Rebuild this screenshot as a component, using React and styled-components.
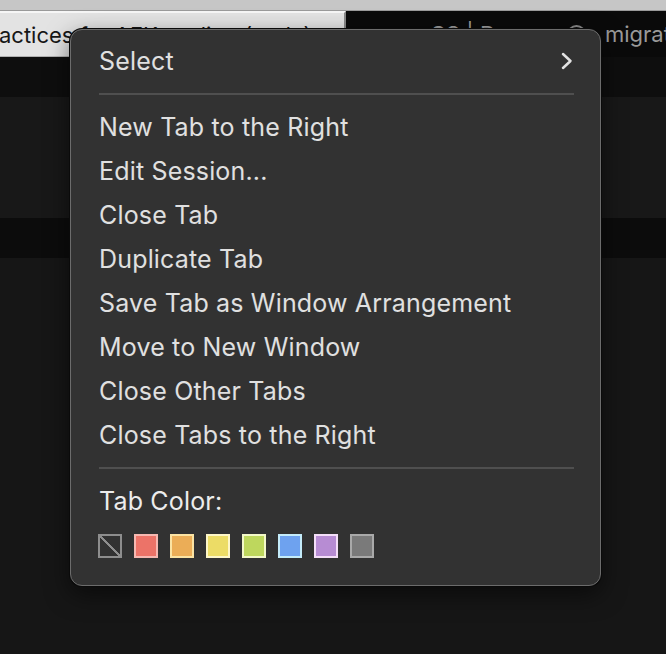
import React from 'react'
import styled, { createGlobalStyle } from 'styled-components'

const GlobalStyle = createGlobalStyle`
  html, body {
    margin: 0;
    padding: 0;
    background: #161616;
  }
  body {
    font-family: Inter, "Liberation Sans", sans-serif;
  }
`;

const Screen = styled.div`
  position: relative;
  width: 666px;
  height: 654px;
  overflow: hidden;
  background: #161616;
  display: flex;
  flex-direction: column;
`;

const TopStrip = styled.div`
  height: 10px;
  background: #c6c6c6;
  border-bottom: 1px solid #9a9a9a;
`;

const TabBar = styled.div`
  height: 46px;
  display: flex;
`;

const ActiveTab = styled.div`
  width: 344px;
  background: #e3e3e3;
  border-top: 2px solid #f6f6f6;
  border-right: 2px solid #8a8a8a;
  border-bottom: 1px solid #b0b0b0;
  display: flex;
  align-items: center;
  overflow: hidden;
  white-space: nowrap;
  font-size: 22px;
  color: #161616;
  span {
    margin-left: -1px;
  }
`;

const OtherTabs = styled.div`
  flex: 1;
  background: #0a0a0a;
  display: flex;
  align-items: center;
  overflow: hidden;
  padding-left: 84px;
`;

const InactiveTab = styled.div`
  flex: none;
  width: ${p => p.$w}px;
  display: flex;
  align-items: center;
  overflow: hidden;
  white-space: nowrap;
  font-size: 22px;
  color: #9a9a9a;
`;

const TabIcon = styled.span`
  flex: none;
  width: 19px;
  height: 19px;
  box-sizing: border-box;
  border: 2px solid #8a8a8a;
  border-radius: 50%;
  margin-right: 19px;
`;

const Band = styled.div`
  height: ${p => p.$h}px;
  background: ${p => p.$bg};
  flex: ${p => (p.$grow ? 1 : 'none')};
`;

const Menu = styled.div`
  position: absolute;
  top: 29px;
  left: 70px;
  width: 531px;
  box-sizing: border-box;
  padding: 9px 0 27px;
  background: #323232;
  border: 1px solid #6c6c6c;
  border-radius: 12px;
  box-shadow: 0 0 0 1px #0a0a0a, 0 8px 24px rgba(0, 0, 0, 0.55);
  color: #e0e0e0;
  font-size: 25px;
  letter-spacing: 0.17px;
`;

const Item = styled.div`
  height: 44px;
  display: flex;
  align-items: center;
  justify-content: space-between;
  padding: 0 26px 0 28px;
  white-space: nowrap;
  color: ${p => (p.$header ? '#ececec' : '#e0e0e0')};
`;

const Separator = styled.div`
  height: 22px;
  display: flex;
  align-items: center;
  padding: 0 26px 0 28px;
  &::after {
    content: '';
    flex: 1;
    height: 2px;
    background: #4f4f4f;
  }
`;

const Swatches = styled.div`
  display: flex;
  gap: 12px;
  padding: 11px 27px 0 27px;
`;

const Swatch = styled.div`
  width: 24px;
  height: 24px;
  box-sizing: border-box;
  border: 2px solid ${p => p.$border};
  background: ${p => p.$fill};
`;

const NoColor = styled(Swatch)`
  background: linear-gradient(
    to top right,
    transparent calc(50% - 1.2px),
    #8e8e8e calc(50% - 1.2px),
    #8e8e8e calc(50% + 1.2px),
    transparent calc(50% + 1.2px)
  );
`;

const Chevron = () => (
  <svg width="14" height="20" viewBox="0 0 14 20">
    <polyline points="3,3 10.5,10 3,17" fill="none" stroke="#e2e2e2" strokeWidth="2.5" strokeLinecap="round" strokeLinejoin="round" />
  </svg>
)

const items = [
  'New Tab to the Right',
  'Edit Session...',
  'Close Tab',
  'Duplicate Tab',
  'Save Tab as Window Arrangement',
  'Move to New Window',
  'Close Other Tabs',
  'Close Tabs to the Right',
]

const colors = [
  { fill: '#ec7368', border: '#f6b8b1' },
  { fill: '#ebad57', border: '#fbe3a3' },
  { fill: '#ecdc66', border: '#fdf6c8' },
  { fill: '#bed75d', border: '#f3f8c8' },
  { fill: '#6ea2ef', border: '#c4ecfa' },
  { fill: '#b78cd3', border: '#f4def8' },
  { fill: '#7a7a7a', border: '#a9a9a9' },
]

export default function App() {
  return (
    <>
      <GlobalStyle />
      <Screen>
        <TopStrip />
        <TabBar>
          <ActiveTab><span>actices for AFK scaling (code)</span></ActiveTab>
          <OtherTabs>
            <InactiveTab $w={137}>CS | D…</InactiveTab>
            <InactiveTab $w={99}>
              <TabIcon />
              migration
            </InactiveTab>
          </OtherTabs>
        </TabBar>
        <Band $h={40} $bg="#0e0e0e" />
        <Band $h={121} $bg="#181818" />
        <Band $h={40} $bg="#0c0c0c" />
        <Band $grow $bg="#161616" />

        <Menu>
          <Item>
            <span>Select</span>
            <Chevron />
          </Item>
          <Separator />
          {items.map(label => (
            <Item key={label}>{label}</Item>
          ))}
          <Separator />
          <Item $header>Tab Color:</Item>
          <Swatches>
            <NoColor $border="#8e8e8e" />
            {colors.map(c => (
              <Swatch key={c.fill} $fill={c.fill} $border={c.border} />
            ))}
          </Swatches>
        </Menu>
      </Screen>
    </>
  )
}
